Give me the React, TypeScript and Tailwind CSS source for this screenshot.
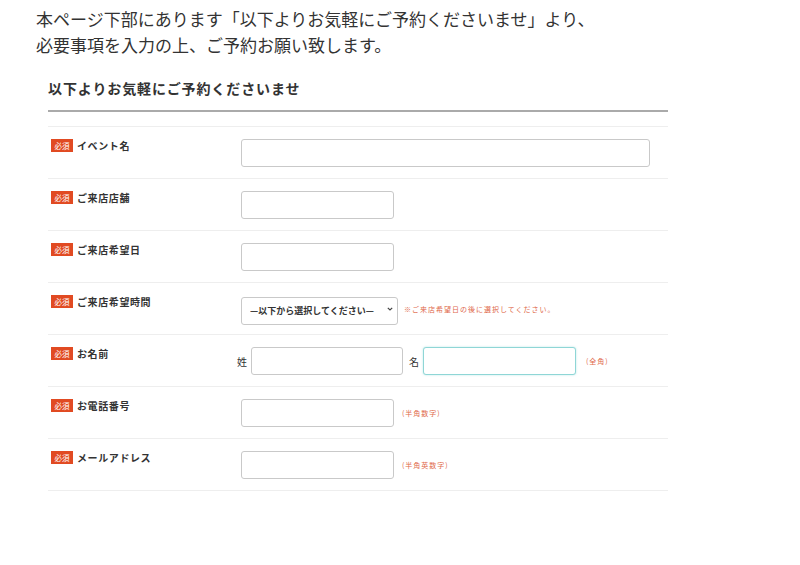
import React from "react";

const font = { fontFamily: '"Noto Sans CJK JP", "Noto Sans", sans-serif' };

function Badge() {
  return (
    <span className="inline-flex items-center justify-center w-[22px] h-[13px] bg-[#e14a22] text-white text-[7.5px] leading-none shrink-0">
      必須
    </span>
  );
}

function Note({ children, cls }: { children: React.ReactNode; cls: string }) {
  return <span className={"text-[7px] tracking-[1px] text-[#e0684a] leading-none " + cls}>{children}</span>;
}

function Row({ label, children }: { label: string; children: React.ReactNode }) {
  return (
    <div className="flex h-[52px] border-b border-[#eeeeee]">
      <div className="w-[193px] pl-[3px] pt-[12px] flex items-start gap-[4px]">
        <Badge />
        <span className="text-[10px] font-bold tracking-[0.6px] leading-[13px] text-[#333]">{label}</span>
      </div>
      <div className="flex-1 pt-[12px]">
        <div className="h-[28px] flex items-center">{children}</div>
      </div>
    </div>
  );
}

function Input({ w, focus }: { w: string; focus?: boolean }) {
  return (
    <input
      className={
        "h-[28px] rounded-[3px] border bg-white outline-none " +
        w +
        (focus ? " border-[#8fd6d6] shadow-[0_0_2px_rgba(120,210,210,0.6)]" : " border-[#c9c9c9]")
      }
    />
  );
}

export default function App() {
  return (
    <div className="bg-white w-[800px] h-[565px] text-[#333]" style={font}>
      <p className="pl-[36px] pt-[6px] text-[17px] leading-[26px] text-[#333]">
        本ページ下部にあります「以下よりお気軽にご予約くださいませ」より、
        <br />
        必要事項を入力の上、ご予約お願い致します。
      </p>
      <div className="ml-[48px] w-[620px] mt-[20px]">
        <h2 className="text-[14px] font-bold tracking-[0.9px] leading-[20px] pb-[12px] border-b-2 border-[#aaaaaa] text-[#333]">
          以下よりお気軽にご予約くださいませ
        </h2>
        <div className="mt-[14px] border-t border-[#eeeeee]">
          <Row label="イベント名">
            <Input w="w-[409px]" />
          </Row>
          <Row label="ご来店店舗">
            <Input w="w-[153px]" />
          </Row>
          <Row label="ご来店希望日">
            <Input w="w-[153px]" />
          </Row>
          <Row label="ご来店希望時間">
            <div className="relative w-[157px] h-[28px]">
              <select className="appearance-none w-full h-full rounded-[3px] border border-[#c9c9c9] bg-white pl-[8px] pr-[14px] text-[9px] font-bold text-[#333] outline-none">
                <option>—以下から選択してください—</option>
              </select>
              <svg className="absolute right-[5px] top-[12px] pointer-events-none" width="6" height="4" viewBox="0 0 6 4">
                <path d="M0.8 0.8l2.2 2.2L5.2 0.8" fill="none" stroke="#444" strokeWidth="1.2" />
              </svg>
            </div>
            <Note cls="ml-[6px]">※ご来店希望日の後に選択してください。</Note>
          </Row>
          <Row label="お名前">
            <span className="-ml-[4px] text-[10px] text-[#333] mr-[4px]">姓</span>
            <Input w="w-[152px]" />
            <span className="text-[10px] text-[#333] ml-[6px] mr-[4px]">名</span>
            <Input w="w-[153px]" focus />
            <Note cls="ml-[10px]">(全角)</Note>
          </Row>
          <Row label="お電話番号">
            <Input w="w-[153px]" />
            <Note cls="ml-[8px]">(半角数字)</Note>
          </Row>
          <Row label="メールアドレス">
            <Input w="w-[153px]" />
            <Note cls="ml-[8px]">(半角英数字)</Note>
          </Row>
        </div>
      </div>
    </div>
  );
}
